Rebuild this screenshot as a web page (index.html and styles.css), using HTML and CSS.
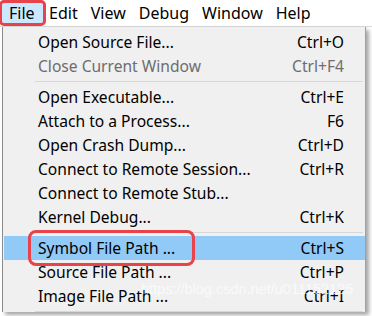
FILE: index.html
```html
<!DOCTYPE html>
<html lang="en">
<head>
    <meta charset="UTF-8">
    <title>WinDbg File Menu</title>
    <link rel="stylesheet" href="styles.css">
</head>
<body>
    <div class="menubar">
        <div class="top-item active">File</div>
        <div class="top-item">Edit</div>
        <div class="top-item">View</div>
        <div class="top-item">Debug</div>
        <div class="top-item">Window</div>
        <div class="top-item">Help</div>
    </div>

    <div class="dropdown">
        <div class="item"><span class="label">Open Source File...</span><span class="key">Ctrl+O</span></div>
        <div class="item disabled"><span class="label">Close Current Window</span><span class="key">Ctrl+F4</span></div>
        <div class="sep"></div>
        <div class="item"><span class="label">Open Executable...</span><span class="key">Ctrl+E</span></div>
        <div class="item"><span class="label">Attach to a Process...</span><span class="key">F6</span></div>
        <div class="item"><span class="label">Open Crash Dump...</span><span class="key">Ctrl+D</span></div>
        <div class="item"><span class="label">Connect to Remote Session...</span><span class="key">Ctrl+R</span></div>
        <div class="item"><span class="label">Connect to Remote Stub...</span><span class="key"></span></div>
        <div class="item"><span class="label">Kernel Debug...</span><span class="key">Ctrl+K</span></div>
        <div class="sep"></div>
        <div class="item selected"><span class="label marked">Symbol File Path ...</span><span class="key">Ctrl+S</span></div>
        <div class="item"><span class="label">Source File Path ...</span><span class="key">Ctrl+P</span></div>
        <div class="item"><span class="label">Image File Path ...</span><span class="key">Ctrl+I</span></div>
        <div class="sep"></div>
        <div class="watermark">https://blog.csdn.net/u011152125</div>
    </div>
</body>
</html>
```

FILE: styles.css
```css
body {
    margin: 0;
    width: 372px;
    height: 316px;
    overflow: hidden;
    background: #fff;
    font-family: "Noto Sans", "Open Sans", sans-serif;
    font-size: 15.6px;
    color: #000;
}

.menubar {
    display: flex;
    height: 27px;
    padding-left: 2px;
    border-bottom: 1px solid #d9d9d9;
    box-sizing: border-box;
    align-items: center;
    font-size: 16px;
}

.top-item {
    padding: 0 6.5px;
    height: 20px;
    line-height: 20px;
}

.top-item.active {
    background: #cce8ff;
    outline: 3px solid #e8434a;
    outline-offset: 0;
    border-radius: 2px;
    padding-left: 7px;
    padding-right: 8px;
}

.dropdown {
    position: relative;
    margin-left: 2px;
    width: 364px;
    background: #f0f0f0;
    border-left: 1px solid #8c8c8c;
    border-right: 1px solid #a0a0a0;
    box-shadow: 3px 3px 4px rgba(0, 0, 0, 0.35);
    padding: 3px 0 0 1px;
    box-sizing: border-box;
}

.item {
    display: flex;
    justify-content: space-between;
    align-items: center;
    height: 24px;
    padding: 0 21px 0 34px;
}

.item.disabled {
    color: #6d6d6d;
}

.item.selected {
    background: #91c9f7;
}

.label.marked {
    outline: 3px solid #e8434a;
    outline-offset: 2px;
    border-radius: 3px;
    margin-left: -5px;
    padding: 2px 15px 2px 5px;
}

.sep {
    height: 1px;
    background: #d7d7d7;
    margin: 3px 2px 3px 31px;
}

.watermark {
    position: absolute;
    left: 138px;
    top: 254px;
    font-family: "Liberation Sans", sans-serif;
    font-size: 14.5px;
    color: rgba(255, 255, 255, 0.7);
}
```
